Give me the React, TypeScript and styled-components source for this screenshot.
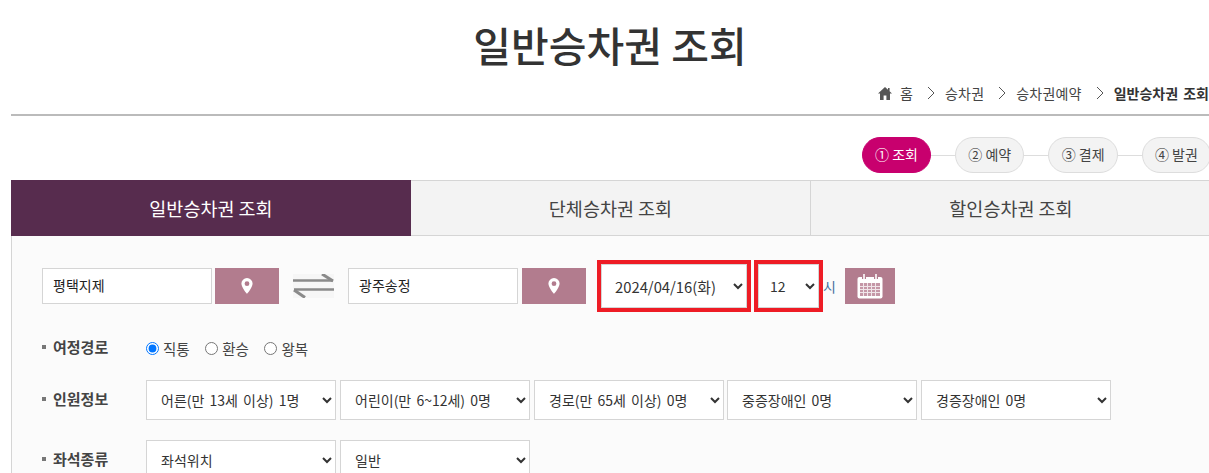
import styled, { createGlobalStyle } from "styled-components";

const GlobalStyle = createGlobalStyle`
  html, body {
    margin: 0;
    padding: 0;
    height: 473px;
    overflow: hidden;
    background: #fff;
    font-family: "Noto Sans CJK KR", "Liberation Sans", sans-serif;
    color: #333;
  }
  * { box-sizing: border-box; }
`;

const Page = styled.div`
  width: 1200px;
  margin-left: 11px;
`;

const Title = styled.h1`
  margin: 0;
  height: 78px;
  padding: 14px 0 0 0;
  width: 1198px;
  text-align: center;
  font-size: 41px;
  line-height: 60px;
  font-weight: 500;
  color: #333;
`;

const Breadcrumb = styled.nav`
  height: 38px;
  padding: 4px 2px 0 0;
  border-bottom: 2px solid #bbb;
  display: flex;
  justify-content: flex-end;
  align-items: flex-start;
  font-size: 14px;
  line-height: 22px;
  color: #444;
  white-space: nowrap;
`;

const Crumb = styled.span<{ $current?: boolean }>`
  font-weight: ${(p) => (p.$current ? 700 : 400)};
  color: ${(p) => (p.$current ? "#333" : "#444")};
  word-spacing: ${(p) => (p.$current ? "2px" : "0")};
  letter-spacing: ${(p) => (p.$current ? "0" : "0.2px")};
`;

const CrumbSep = styled.svg`
  width: 8px;
  height: 14px;
  margin: 4px 10px 0 14px;
  flex: none;
`;

const HomeIcon = styled.svg`
  width: 14px;
  height: 13px;
  margin: 5px 8px 0 0;
  flex: none;
`;

const Stepper = styled.ol`
  list-style: none;
  margin: 21px 0 0 0;
  padding: 0;
  height: 36px;
  display: flex;
  justify-content: flex-end;
  align-items: center;
`;

const Step = styled.li<{ $active?: boolean }>`
  height: 36px;
  padding: 0 12.2px;
  border-radius: 18px;
  border: 1px solid ${(p) => (p.$active ? "#c8006e" : "#ddd")};
  background: ${(p) => (p.$active ? "#c8006e" : "#f3f3f3")};
  color: ${(p) => (p.$active ? "#fff" : "#444")};
  font-size: 14px;
  line-height: 33px;
  white-space: nowrap;
`;

const StepLine = styled.li`
  width: 24px;
  height: 1px;
  background: #ddd;
`;

const Tabs = styled.div`
  margin-top: 7px;
  display: grid;
  grid-template-columns: 400px 399px 401px;
  height: 56px;
`;

const Tab = styled.div<{ $active?: boolean }>`
  display: flex;
  align-items: center;
  justify-content: center;
  padding-bottom: 1px;
  font-size: 18.5px;
  background: ${(p) => (p.$active ? "#572c4e" : "#f3f3f3")};
  color: ${(p) => (p.$active ? "#fff" : "#444")};
  border-top: 1px solid ${(p) => (p.$active ? "#572c4e" : "#d5d5d5")};
  border-bottom: 1px solid ${(p) => (p.$active ? "#572c4e" : "#d5d5d5")};
  & + & + & {
    border-left: 1px solid #d5d5d5;
  }
`;

const Panel = styled.div`
  background: #fbfbfb;
  border-left: 1px solid #d5d5d5;
  padding: 24px 0 0 30px;
  height: 240px;
`;

const RouteRow = styled.div`
  display: flex;
  align-items: center;
  height: 52px;
`;

const TextBox = styled.input`
  width: 170px;
  height: 36px;
  padding: 0 10px 2px;
  border: 1px solid #d5d5d5;
  background: #fff;
  font: inherit;
  font-size: 14px;
  color: #222;
  outline: none;
`;

const ActionButton = styled.button<{ $width: number; $gap: number }>`
  width: ${(p) => p.$width}px;
  height: 36px;
  margin-left: ${(p) => p.$gap}px;
  padding: 0;
  border: 0;
  background: #b27c8e;
  display: flex;
  align-items: center;
  justify-content: center;
`;

const SwapIcon = styled.svg`
  width: 41px;
  height: 24px;
  margin: 0 14px;
  flex: none;
  background: #f6f6f6;
`;

const Highlight = styled.div<{ $gap: number }>`
  border: 4px solid #ee1c25;
  height: 52px;
  margin-left: ${(p) => p.$gap}px;
  flex: none;
`;

const Select = styled.select<{ $width: number }>`
  width: ${(p) => p.$width}px;
  height: 40px;
  padding: 0 0 0 10px;
  border: 1px solid #d5d5d5;
  border-radius: 0;
  background: #fff;
  font-family: inherit;
  font-size: 14px;
  word-spacing: 2px;
  color: #333;
  outline: none;
`;

const DateSelect = styled(Select)`
  height: 44px;
  padding-left: 9px;
  font-size: 14.8px;
`;

const HourSelect = styled(Select)`
  height: 44px;
  padding-left: 7px;
`;

const HourText = styled.span`
  font-size: 14px;
  color: #44709f;
`;

const FormRow = styled.div<{ $top: number }>`
  display: flex;
  align-items: center;
  margin-top: ${(p) => p.$top}px;
  min-height: 40px;
`;

const RowLabel = styled.div`
  width: 104px;
  flex: none;
  display: flex;
  align-items: center;
  gap: 7px;
  margin-top: -3px;
  font-size: 15px;
  font-weight: 700;
  color: #444;
  &::before {
    content: "";
    width: 4px;
    height: 4px;
    background: #777;
  }
`;

const RadioGroup = styled.div`
  display: flex;
  align-items: center;
  gap: 15.5px;
`;

const RadioLabel = styled.label`
  display: flex;
  align-items: center;
  gap: 4px;
  font-size: 14.5px;
  color: #444;
`;

const Radio = styled.input`
  width: 13px;
  height: 13px;
  margin: 0;
`;

const SelectGroup = styled.div`
  display: flex;
  gap: 4px;
  & > :nth-child(4) {
    margin-left: -1px;
  }
`;

const passengers = [
  "어른(만 13세 이상) 1명",
  "어린이(만 6~12세) 0명",
  "경로(만 65세 이상) 0명",
  "중증장애인 0명",
  "경증장애인 0명",
];

function PinIcon() {
  return (
    <svg width="12" height="16" viewBox="0 0 12 16">
      <path
        fillRule="evenodd"
        fill="#fff"
        d="M6 0a5.6 5.6 0 0 0-5.6 5.6C.4 9.6 6 16 6 16s5.6-6.4 5.6-10.4A5.6 5.6 0 0 0 6 0Zm0 3.3a2.4 2.4 0 1 1 0 4.8 2.4 2.4 0 0 1 0-4.8Z"
      />
    </svg>
  );
}

function Chevron() {
  return (
    <CrumbSep viewBox="0 0 8 14">
      <path d="M1 1l6 6-6 6" fill="none" stroke="#555" strokeWidth="1" />
    </CrumbSep>
  );
}

function App() {
  return (
    <Page>
      <GlobalStyle />
      <Title>일반승차권 조회</Title>
      <Breadcrumb>
        <HomeIcon viewBox="0 0 14 13">
          <path fill="#555" d="M7 0 0 6.5h2V13h3.6V8.6h2.8V13H12V6.5h2L11.6 4.2V1H10v1.7Z" />
        </HomeIcon>
        <Crumb>홈</Crumb>
        <Chevron />
        <Crumb>승차권</Crumb>
        <Chevron />
        <Crumb>승차권예약</Crumb>
        <Chevron />
        <Crumb $current>일반승차권 조회</Crumb>
      </Breadcrumb>
      <Stepper>
        <Step $active>① 조회</Step>
        <StepLine />
        <Step>② 예약</Step>
        <StepLine />
        <Step>③ 결제</Step>
        <StepLine />
        <Step>④ 발권</Step>
      </Stepper>
      <Tabs>
        <Tab $active>일반승차권 조회</Tab>
        <Tab>단체승차권 조회</Tab>
        <Tab>할인승차권 조회</Tab>
      </Tabs>
      <Panel>
        <RouteRow>
          <TextBox defaultValue="평택지제" />
          <ActionButton $width={64} $gap={3}>
            <PinIcon />
          </ActionButton>
          <SwapIcon viewBox="0 0 41 24">
            <path d="M0 6.5h40" fill="none" stroke="#8a8a8a" strokeWidth="2.4" />
            <path d="M29 0l11 7" fill="none" stroke="#8a8a8a" strokeWidth="3" />
            <path d="M41 15.5H1" fill="none" stroke="#8a8a8a" strokeWidth="2.4" />
            <path d="M1 16l11 7.5" fill="none" stroke="#8a8a8a" strokeWidth="3" />
          </SwapIcon>
          <TextBox defaultValue="광주송정" />
          <ActionButton $width={64} $gap={4}>
            <PinIcon />
          </ActionButton>
          <Highlight $gap={11}>
            <DateSelect $width={146} defaultValue="2024/04/16(화)">
              <option>2024/04/16(화)</option>
            </DateSelect>
          </Highlight>
          <Highlight $gap={3}>
            <HourSelect $width={61} defaultValue="12">
              <option>12</option>
            </HourSelect>
          </Highlight>
          <HourText>시</HourText>
          <ActionButton $width={50} $gap={9}>
            <svg width="26" height="25" viewBox="0 0 26 25">
              <rect x="0.5" y="3" width="25" height="21.5" rx="2" fill="#fff" />
              <path fill="#b27c8e" d="M5 0h4v5H5zM17 0h4v5h-4z" />
              <path fill="#fff" d="M6.2 0h1.6v5.5H6.2zM18.2 0h1.6v5.5h-1.6z" />
              <rect x="3" y="9" width="20" height="13" fill="#c597a7" />
              <path
                stroke="#fff"
                strokeWidth="1"
                opacity="0.75"
                d="M3 12.5h20M3 15.5h20M3 18.5h20M6.5 9v13M10.5 9v13M14.5 9v13M18.5 9v13"
              />
            </svg>
          </ActionButton>
        </RouteRow>
        <FormRow $top={16}>
          <RowLabel>여정경로</RowLabel>
          <RadioGroup>
            <RadioLabel>
              <Radio type="radio" name="route" defaultChecked />직통
            </RadioLabel>
            <RadioLabel>
              <Radio type="radio" name="route" />환승
            </RadioLabel>
            <RadioLabel>
              <Radio type="radio" name="route" />왕복
            </RadioLabel>
          </RadioGroup>
        </FormRow>
        <FormRow $top={12}>
          <RowLabel>인원정보</RowLabel>
          <SelectGroup>
            {passengers.map((label) => (
              <Select key={label} $width={190}>
                <option>{label}</option>
              </Select>
            ))}
          </SelectGroup>
        </FormRow>
        <FormRow $top={20}>
          <RowLabel>좌석종류</RowLabel>
          <SelectGroup>
            <Select $width={190}>
              <option>좌석위치</option>
            </Select>
            <Select $width={190}>
              <option>일반</option>
            </Select>
          </SelectGroup>
        </FormRow>
      </Panel>
    </Page>
  );
}

export default App;
